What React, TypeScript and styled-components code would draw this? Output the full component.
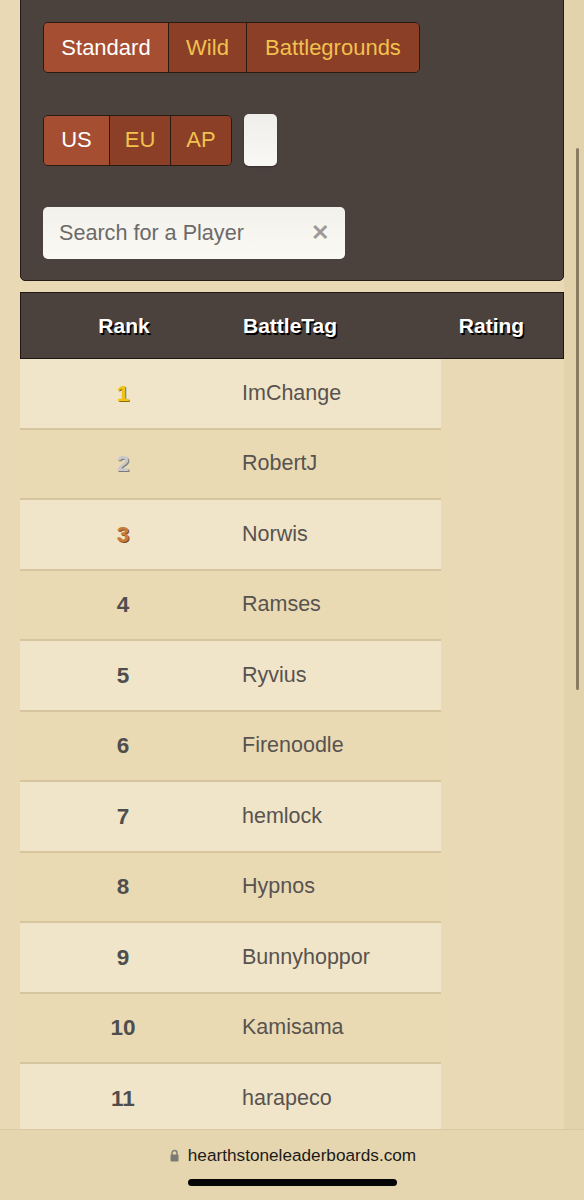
import React from 'react'
import styled, { createGlobalStyle } from 'styled-components'

const GlobalStyle = createGlobalStyle`
  html, body {
    margin: 0;
    padding: 0;
    background: #e9d9b4;
    font-family: "Liberation Sans", Arial, sans-serif;
  }
`

const Page = styled.div`
  display: flex;
  min-height: 1200px;
  overflow: hidden;
`

const Main = styled.div`
  width: 544px;
  margin-left: 20px;
  display: flex;
  flex-direction: column;
  gap: 11px;
`

const Gutter = styled.div`
  flex: 1;
  background: #e3d3ad;
  display: flex;
  justify-content: center;
  padding-left: 6px;
`

const ScrollThumb = styled.div`
  width: 3px;
  height: 542px;
  margin-top: 148px;
  border-radius: 2px;
  background: #8a7b63;
`

const Panel = styled.div`
  margin-top: -6px;
  background: #4b413d;
  border: 1px solid #241c17;
  border-radius: 5px;
  padding: 27px 22px 21px 22px;
  display: flex;
  flex-direction: column;
  align-items: flex-start;
  gap: 41px;
`

const Row = styled.div`
  display: flex;
  align-items: center;
  gap: 12px;
`

const Group = styled.div`
  display: flex;
  height: 49px;
  border: 1px solid #2a1a12;
  border-radius: 5px;
  overflow: hidden;
`

const ToggleButton = styled.button<{ $active?: boolean; $width: number }>`
  width: ${p => p.$width}px;
  border: none;
  border-left: 1px solid #2a1a12;
  padding: 0;
  font-family: inherit;
  font-size: 22px;
  background: ${p => (p.$active ? '#a64e31' : '#8a3f26')};
  color: ${p => (p.$active ? '#ffffff' : '#f2c14e')};
  &:first-child {
    border-left: none;
  }
`

const Blank = styled.div`
  width: 33px;
  height: 52px;
  border-radius: 5px;
  background: linear-gradient(#f0eeea, #faf8f4);
  box-shadow: 0 1px 2px rgba(0, 0, 0, 0.3);
`

const Search = styled.div`
  width: 302px;
  height: 52px;
  box-sizing: border-box;
  border-radius: 5px;
  background: linear-gradient(#f3f1ec, #fbf9f4);
  display: flex;
  align-items: center;
  justify-content: space-between;
  padding: 0 16px 0 16px;
`

const Placeholder = styled.span`
  font-size: 21.6px;
  color: #6c6a68;
`

const Clear = styled.span`
  font-size: 22px;
  font-weight: bold;
  color: #9d9b98;
`

const Table = styled.div`
  display: flex;
  flex-direction: column;
`

const Head = styled.div`
  display: grid;
  grid-template-columns: 206px 215px 1fr;
  height: 67px;
  box-sizing: border-box;
  align-items: center;
  background: #4b413d;
  border: 1.5px solid #1e1713;
`

const HeadCell = styled.div<{ $align: 'center' | 'left' }>`
  font-size: 21px;
  font-weight: bold;
  color: #ffffff;
  text-shadow: 1.5px 1.5px 0 #000;
  text-align: ${p => p.$align};
  padding-left: ${p => (p.$align === 'left' ? '16px' : '0')};
`

const RatingHead = styled(HeadCell)`
  padding-right: 22px;
`

const Body = styled.div`
  width: 421px;
  display: flex;
  flex-direction: column;
`

const PlayerRow = styled.div<{ $odd: boolean }>`
  display: grid;
  grid-template-columns: 206px 215px;
  align-items: center;
  height: 68.5px;
  border-bottom: 2px solid #d6c59e;
  background: ${p => (p.$odd ? '#f1e5c9' : '#eadab4')};
`

const medal: Record<number, { color: string; shadow: string }> = {
  1: { color: '#f1c21a', shadow: '#8b6b0f' },
  2: { color: '#c9c9c9', shadow: '#7a7a7a' },
  3: { color: '#c97a38', shadow: '#7b4a1e' },
}

const RankCell = styled.div<{ $rank: number }>`
  text-align: center;
  font-size: 22.5px;
  font-weight: bold;
  padding-top: 1px;
  color: ${p => medal[p.$rank]?.color ?? '#4e4e4e'};
  text-shadow: ${p => (medal[p.$rank] ? `1px 1px 0 ${medal[p.$rank].shadow}` : 'none')};
`

const NameCell = styled.div`
  padding-left: 16px;
  font-size: 21.5px;
  color: #58534f;
`

const BrowserBar = styled.div`
  position: fixed;
  left: 0;
  right: 0;
  bottom: 0;
  height: 71px;
  background: #e6d6b0;
  border-top: 1px solid #d9c8a1;
  display: flex;
  flex-direction: column;
  align-items: center;
  padding-top: 15px;
  box-sizing: border-box;
  gap: 13px;
`

const Url = styled.div`
  display: flex;
  align-items: center;
  gap: 9px;
  font-size: 17.2px;
  color: #1c1a17;
  padding-left: 2px;
`

const HomeIndicator = styled.div`
  width: 209px;
  height: 7px;
  border-radius: 4px;
  background: #050505;
`

const players = [
  'ImChange',
  'RobertJ',
  'Norwis',
  'Ramses',
  'Ryvius',
  'Firenoodle',
  'hemlock',
  'Hypnos',
  'Bunnyhoppor',
  'Kamisama',
  'harapeco',
]

function Lock() {
  return (
    <svg width="9" height="13" viewBox="0 0 9 13">
      <path d="M2 6V4a2.5 2.5 0 0 1 5 0v2" fill="none" stroke="#7d7a75" strokeWidth="1.4" />
      <rect x="0.5" y="5.5" width="8" height="7" rx="1" fill="#7d7a75" />
    </svg>
  )
}

export default function App() {
  return (
    <Page>
      <GlobalStyle />
      <Main>
        <Panel>
          <Group>
            <ToggleButton $active $width={124}>Standard</ToggleButton>
            <ToggleButton $width={78}>Wild</ToggleButton>
            <ToggleButton $width={173}>Battlegrounds</ToggleButton>
          </Group>
          <Row>
            <Group>
              <ToggleButton $active $width={65}>US</ToggleButton>
              <ToggleButton $width={61}>EU</ToggleButton>
              <ToggleButton $width={61}>AP</ToggleButton>
            </Group>
            <Blank />
          </Row>
          <Search>
            <Placeholder>Search for a Player</Placeholder>
            <Clear>✕</Clear>
          </Search>
        </Panel>

        <Table>
          <Head>
            <HeadCell $align="center">Rank</HeadCell>
            <HeadCell $align="left">BattleTag</HeadCell>
            <RatingHead $align="center">Rating</RatingHead>
          </Head>
          <Body>
            {players.map((name, i) => (
              <PlayerRow key={name} $odd={i % 2 === 0}>
                <RankCell $rank={i + 1}>{i + 1}</RankCell>
                <NameCell>{name}</NameCell>
              </PlayerRow>
            ))}
          </Body>
        </Table>
      </Main>
      <Gutter>
        <ScrollThumb />
      </Gutter>

      <BrowserBar>
        <Url>
          <Lock />
          hearthstoneleaderboards.com
        </Url>
        <HomeIndicator />
      </BrowserBar>
    </Page>
  )
}
